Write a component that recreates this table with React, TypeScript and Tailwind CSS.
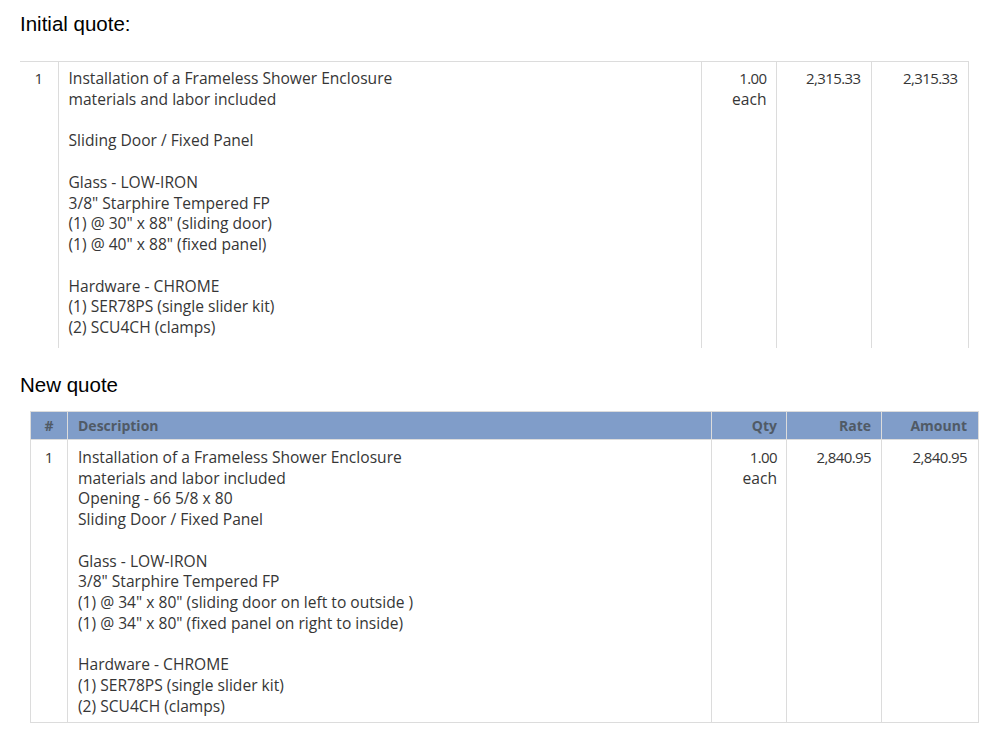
const initialLines = [
  "Installation of a Frameless Shower Enclosure",
  "materials and labor included",
  "",
  "Sliding Door / Fixed Panel",
  "",
  "Glass - LOW-IRON",
  '3/8" Starphire Tempered FP',
  '(1) @ 30" x 88" (sliding door)',
  '(1) @ 40" x 88" (fixed panel)',
  "",
  "Hardware - CHROME",
  "(1) SER78PS (single slider kit)",
  "(2) SCU4CH (clamps)",
];

const newLines = [
  "Installation of a Frameless Shower Enclosure",
  "materials and labor included",
  "Opening - 66 5/8 x 80",
  "Sliding Door / Fixed Panel",
  "",
  "Glass - LOW-IRON",
  '3/8" Starphire Tempered FP',
  '(1) @ 34" x 80" (sliding door on left to outside )',
  '(1) @ 34" x 80" (fixed panel on right to inside)',
  "",
  "Hardware - CHROME",
  "(1) SER78PS (single slider kit)",
  "(2) SCU4CH (clamps)",
];

function Lines({ lines }: { lines: string[] }) {
  return (
    <>
      {lines.map((l, i) => (
        <div key={i}>{l || "\u00a0"}</div>
      ))}
    </>
  );
}

export default function App() {
  return (
    <div className="min-h-[740px] bg-white pl-[20px] pt-[12px] text-[#363636]">
      <h2 className="text-[20.5px] leading-[24px] text-black font-['Liberation_Sans',Arial,sans-serif]">
        Initial quote:
      </h2>

      {/* Initial quote table: top rule + column lines only */}
      <table className="mt-[25px] w-[948px] table-fixed border-collapse font-['Open_Sans',sans-serif] text-[15px] leading-[20.75px]">
        <colgroup>
          <col className="w-[38px]" />
          <col className="w-[643px]" />
          <col className="w-[75px]" />
          <col className="w-[95px]" />
          <col className="w-[97px]" />
        </colgroup>
        <tbody>
          <tr className="border-t border-[#dcdcdc] align-top">
            <td className="border-r border-[#dcdcdc] pt-[6px] pb-[10px] text-center">1</td>
            <td className="border-r border-[#dcdcdc] pt-[6px] pb-[10px] pl-[10px] text-[15.6px]">
              <Lines lines={initialLines} />
            </td>
            <td className="border-r border-[#dcdcdc] pt-[6px] pr-[9px] text-right">
              <span className="tracking-[-0.6px]">1.00</span>
              <br />
              <span className="text-[15.6px]">each</span>
            </td>
            <td className="border-r border-[#dcdcdc] pt-[6px] pr-[10px] text-right tracking-[-0.6px]">2,315.33</td>
            <td className="border-r border-[#dcdcdc] pt-[6px] pr-[10px] text-right tracking-[-0.6px]">2,315.33</td>
          </tr>
        </tbody>
      </table>

      <h2 className="mt-[25px] text-[20.5px] leading-[24px] text-black font-['Liberation_Sans',Arial,sans-serif]">
        New quote
      </h2>

      <table className="ml-[10px] mt-[14px] w-[948px] table-fixed border-collapse border border-[#dcdcdc] font-['Open_Sans',sans-serif] text-[15px] leading-[20.75px]">
        <colgroup>
          <col className="w-[37px]" />
          <col className="w-[644px]" />
          <col className="w-[75px]" />
          <col className="w-[95px]" />
          <col className="w-[97px]" />
        </colgroup>
        <thead>
          <tr className="h-[28px] bg-[#809dc9] text-[14px] font-bold text-[#505a66]">
            <th className="border border-[#dcdcdc] pt-[3px] text-center">#</th>
            <th className="border border-[#dcdcdc] pt-[3px] pl-[10px] text-left">Description</th>
            <th className="border border-[#dcdcdc] pt-[3px] pr-[9px] text-right">Qty</th>
            <th className="border border-[#dcdcdc] pt-[3px] pr-[10px] text-right">Rate</th>
            <th className="border border-[#dcdcdc] pt-[3px] pr-[11px] text-right">Amount</th>
          </tr>
        </thead>
        <tbody>
          <tr className="align-top">
            <td className="border-r border-[#dcdcdc] pt-[7px] pb-[5px] text-center">1</td>
            <td className="border-r border-[#dcdcdc] pt-[7px] pb-[5px] pl-[10px] text-[15.6px]">
              <Lines lines={newLines} />
            </td>
            <td className="border-r border-[#dcdcdc] pt-[7px] pr-[9px] text-right">
              <span className="tracking-[-0.6px]">1.00</span>
              <br />
              <span className="text-[15.6px]">each</span>
            </td>
            <td className="border-r border-[#dcdcdc] pt-[7px] pr-[10px] text-right tracking-[-0.6px]">2,840.95</td>
            <td className="border-r border-[#dcdcdc] pt-[7px] pr-[11px] text-right tracking-[-0.6px]">2,840.95</td>
          </tr>
        </tbody>
      </table>
    </div>
  );
}
